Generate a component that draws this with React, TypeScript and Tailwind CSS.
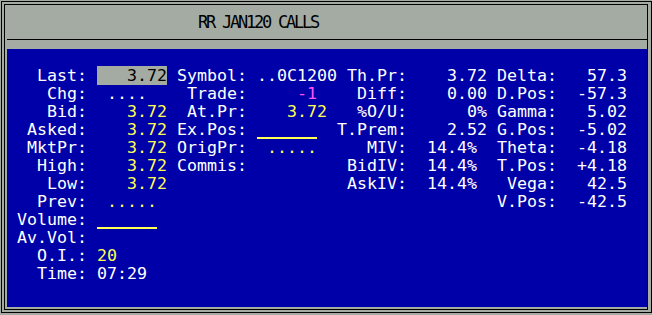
import React from "react";

type Color = "w" | "y" | "m" | "k" | "u";
type Seg = [number, string, Color];

const COLOR: Record<Color, string> = {
  w: "text-white",
  y: "text-[#ffff55]",
  m: "text-[#ff55ff]",
  k: "text-black bg-[#a3aba3]",
  u: "inline-block align-top mt-[1px] h-[17px] text-transparent border-b-2 border-[#ffff55] leading-[14px]",
};

const ROWS: Seg[][] = [
  [[2, "Last:", "w"], [8, "   3.72", "k"], [16, "Symbol:", "w"], [24, "..0C1200", "w"], [33, "Th.Pr:", "w"], [43, "3.72", "w"], [48, "Delta:", "w"], [57, "57.3", "w"]],
  [[3, "Chg:", "w"], [9, "....", "w"], [17, "Trade:", "w"], [28, "-1", "m"], [34, "Diff:", "w"], [43, "0.00", "w"], [48, "D.Pos:", "w"], [56, "-57.3", "w"]],
  [[3, "Bid:", "w"], [11, "3.72", "y"], [17, "At.Pr:", "w"], [27, "3.72", "y"], [34, "%O/U:", "w"], [45, "0%", "w"], [48, "Gamma:", "w"], [57, "5.02", "w"]],
  [[1, "Asked:", "w"], [11, "3.72", "y"], [16, "Ex.Pos:", "w"], [24, "______", "u"], [32, "T.Prem:", "w"], [43, "2.52", "w"], [48, "G.Pos:", "w"], [56, "-5.02", "w"]],
  [[1, "MktPr:", "w"], [11, "3.72", "y"], [16, "OrigPr:", "w"], [25, ".....", "y"], [35, "MIV:", "w"], [41, "14.4%", "w"], [48, "Theta:", "w"], [56, "-4.18", "w"]],
  [[2, "High:", "w"], [11, "3.72", "y"], [16, "Commis:", "w"], [33, "BidIV:", "w"], [41, "14.4%", "w"], [48, "T.Pos:", "w"], [56, "+4.18", "w"]],
  [[3, "Low:", "w"], [11, "3.72", "y"], [33, "AskIV:", "w"], [41, "14.4%", "w"], [49, "Vega:", "w"], [57, "42.5", "w"]],
  [[2, "Prev:", "w"], [9, ".....", "y"], [48, "V.Pos:", "w"], [56, "-42.5", "w"]],
  [[0, "Volume:", "w"], [8, "______", "u"]],
  [[0, "Av.Vol:", "w"]],
  [[2, "O.I.:", "w"], [8, "20", "y"]],
  [[2, "Time:", "w"], [8, "07:29", "w"]],
];

function Row({ segs }: { segs: Seg[] }) {
  const parts: React.ReactNode[] = [];
  let col = 0;
  segs.forEach(([c, text, color], i) => {
    if (c > col) {
      parts.push(<span key={`s${i}`}>{" ".repeat(c - col)}</span>);
    }
    parts.push(
      <span key={`t${i}`} className={COLOR[color]}>
        {text}
      </span>
    );
    col = c + text.length;
  });
  return <div className="h-[18px] whitespace-pre">{parts}</div>;
}

export default function App() {
  return (
    <div className="w-[652px] h-[315px] bg-[#a3aba3] pt-[1px] pl-[1px] overflow-hidden">
      <div className="w-[651px] h-[312px] border border-black pl-[2px] pr-[3px] pt-[2px] pb-[2px] flex">
        <div className="flex-1 border border-black flex flex-col pl-[2px]">
          <div className="h-[34px] pt-[7px] pl-[191px] font-['DejaVu_Sans_Mono',monospace] text-[17px] leading-[20px] tracking-[-2.23px] text-black whitespace-pre">
            RR JAN120 CALLS
          </div>
          <div className="h-px bg-black" />
          <div className="h-[9px]" />
          <div className="h-[258px] bg-[#0000a8] pl-[10px] pt-[18px] font-['DejaVu_Sans_Mono',monospace] text-[16.61px] leading-[18px] text-white">
            {ROWS.map((r, i) => (
              <Row key={i} segs={r} />
            ))}
          </div>
        </div>
      </div>
    </div>
  );
}
